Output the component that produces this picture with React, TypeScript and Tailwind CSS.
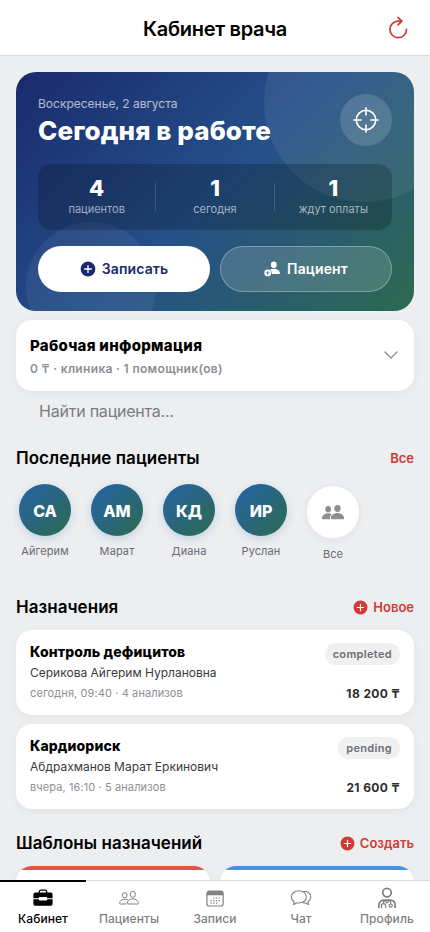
import React from 'react';

interface IconProps {
  className?: string;
}

interface Patient {
  initials: string;
  name: string;
}

interface Assignment {
  title: string;
  patient: string;
  meta: string;
  status: string;
  price: string;
}

const stats = [
  { value: '4', label: 'пациентов' },
  { value: '1', label: 'сегодня' },
  { value: '1', label: 'ждут оплаты' },
];

const patients: Patient[] = [
  { initials: 'СА', name: 'Айгерим' },
  { initials: 'АМ', name: 'Марат' },
  { initials: 'КД', name: 'Диана' },
  { initials: 'ИР', name: 'Руслан' },
];

const assignments: Assignment[] = [
  {
    title: 'Контроль дефицитов',
    patient: 'Серикова Айгерим Нурлановна',
    meta: 'сегодня, 09:40 · 4 анализов',
    status: 'completed',
    price: '18 200 ₸',
  },
  {
    title: 'Кардиориск',
    patient: 'Абдрахманов Марат Еркинович',
    meta: 'вчера, 16:10 · 5 анализов',
    status: 'pending',
    price: '21 600 ₸',
  },
];

const RefreshIcon: React.FC<IconProps> = ({ className }) => (
  <svg viewBox="0 0 24 24" fill="none" stroke="currentColor" strokeWidth="1.7" strokeLinecap="round" strokeLinejoin="round" className={className}>
    <path d="M20.5 13.4A8.3 8.3 0 1 1 12.2 5.1H15.6" />
    <path d="M12 1.4L15.8 5.1L12 8.9" />
  </svg>
);

const ScopeIcon: React.FC<IconProps> = ({ className }) => (
  <svg viewBox="0 0 26 26" fill="none" stroke="currentColor" strokeWidth="1.6" strokeLinecap="round" className={className}>
    <circle cx="13" cy="13" r="9.7" />
    <path d="M13 .9V8M13 18V25.1M.9 13H8M18 13H25.1" />
  </svg>
);

const PlusCircleIcon: React.FC<IconProps> = ({ className }) => (
  <svg viewBox="0 0 16 16" className={className}>
    <circle cx="8" cy="8" r="7.4" fill="currentColor" />
    <path d="M8 4.6V11.4M4.6 8H11.4" stroke="white" strokeWidth="1.3" strokeLinecap="round" />
  </svg>
);

const PersonAddIcon: React.FC<IconProps> = ({ className }) => (
  <svg viewBox="0 0 16 16" fill="currentColor" className={className}>
    <ellipse cx="9.8" cy="3.7" rx="2.9" ry="3.2" />
    <path d="M5.9 8.6C7 8 8.3 7.7 9.8 7.7C13.5 7.7 15.9 9.9 15.9 12.3C15.9 12.9 15.6 13.1 15 13.1H7.8C7.8 11.1 7.2 9.6 5.9 8.6Z" />
    <path fillRule="evenodd" d="M3.7 8.5A3.4 3.4 0 1 1 3.7 15.3A3.4 3.4 0 1 1 3.7 8.5ZM3.3 9.9V11.5H1.7V12.3H3.3V13.9H4.1V12.3H5.7V11.5H4.1V9.9Z" />
  </svg>
);

const ChevronDownIcon: React.FC<IconProps> = ({ className }) => (
  <svg viewBox="0 0 14 8" fill="none" stroke="currentColor" strokeWidth="1.4" strokeLinecap="round" strokeLinejoin="round" className={className}>
    <path d="M1 1L7 7L13 1" />
  </svg>
);

const PeopleFillIcon: React.FC<IconProps> = ({ className }) => (
  <svg viewBox="0 0 22 15" fill="currentColor" className={className}>
    <ellipse cx="6.2" cy="4.2" rx="2.9" ry="3.1" />
    <ellipse cx="15.5" cy="3.5" rx="3.2" ry="3.4" />
    <path d="M0 13.2C0 10.5 2.7 8.3 6.2 8.3C7.6 8.3 8.8 8.6 9.8 9.2C8.5 10.3 7.7 12 7.9 14.3H1C.3 14.3 0 13.9 0 13.2Z" />
    <path d="M8.9 13.2C8.9 10.4 11.7 8.1 15.5 8.1C19.2 8.1 22 10.4 22 13.2C22 13.9 21.6 14.3 20.9 14.3H10C9.3 14.3 8.9 13.9 8.9 13.2Z" />
  </svg>
);

const BriefcaseIcon: React.FC<IconProps> = ({ className }) => (
  <svg viewBox="0 0 20 18" className={className}>
    <path d="M6.3 4V2.8C6.3 1.8 6.9 1.2 7.9 1.2H12.1C13.1 1.2 13.7 1.8 13.7 2.8V4" fill="none" stroke="currentColor" strokeWidth="1.3" />
    <path d="M2.6 3.6H17.4C18.9 3.6 19.6 4.4 19.6 5.8V9.2H14.2V8.8C14.2 8.2 13.8 7.9 13.3 7.9H6.7C6.2 7.9 5.8 8.2 5.8 8.8V9.2H.4V5.8C.4 4.4 1.1 3.6 2.6 3.6Z" fill="currentColor" />
    <path d="M.4 10.3H5.8V10.5C5.8 11.1 6.2 11.4 6.7 11.4H13.3C13.8 11.4 14.2 11.1 14.2 10.5V10.3H19.6V14.4C19.6 15.9 18.8 16.7 17.3 16.7H2.7C1.2 16.7 .4 15.9 .4 14.4Z" fill="currentColor" />
  </svg>
);

const PeopleIcon: React.FC<IconProps> = ({ className }) => (
  <svg viewBox="0 0 20 16" fill="none" stroke="currentColor" strokeWidth="1" strokeLinejoin="round" className={className}>
    <ellipse cx="5.7" cy="5.2" rx="2.3" ry="2.6" />
    <ellipse cx="13.8" cy="4.3" rx="2.6" ry="3" />
    <path d="M8.9 9.9C8 9.4 6.9 9.2 5.7 9.2C2.7 9.2 .6 11.1 .6 13.2C.6 13.7 .8 14 1.4 14H7" />
    <path d="M13.8 8.8C16.9 8.8 19.4 10.9 19.4 13.2C19.4 13.7 19.1 14 18.6 14H9C8.5 14 8.2 13.7 8.2 13.2C8.2 10.9 10.7 8.8 13.8 8.8Z" />
  </svg>
);

const CalendarIcon: React.FC<IconProps> = ({ className }) => (
  <svg viewBox="0 0 18 17" className={className}>
    <rect x=".9" y="1.2" width="16.2" height="14.8" rx="2.3" fill="none" stroke="currentColor" strokeWidth="1.2" />
    <path d="M.9 3.8C.9 2.2 1.8 1.2 3.3 1.2H14.7C16.2 1.2 17.1 2.2 17.1 3.8V5.3H.9Z" fill="currentColor" />
    <path d="M7.3 8H8.5M10 8H11.2M12.7 8H13.9M4.4 10.6H5.6M7.3 10.6H8.5M10 10.6H11.2M12.7 10.6H13.9M4.4 13.2H5.6M7.3 13.2H8.5M10 13.2H11.2" stroke="currentColor" strokeWidth="1.2" />
  </svg>
);

const ChatIcon: React.FC<IconProps> = ({ className }) => (
  <svg viewBox="0 0 22 18" fill="none" stroke="currentColor" strokeWidth="1.1" strokeLinecap="round" strokeLinejoin="round" className={className}>
    <path d="M8.9 1.7C13 1.7 16.3 4.3 16.3 7.9C16.3 11.5 13 14 8.9 14C8.1 14 7.3 13.9 6.6 13.8C5.7 14.7 4.6 15.4 3.3 15.5C3.9 14.7 4.2 13.6 4.1 12.7C2.4 11.5 1.3 9.8 1.3 7.9C1.3 4.3 4.8 1.7 8.9 1.7Z" />
    <path d="M13.7 2.5C17.8 2 20.8 4.6 20.8 8C20.8 10 19.8 11.7 18.1 12.8C18 13.7 18.3 14.7 18.9 15.5C17.6 15.4 16.5 14.7 15.6 13.8C14.7 14 13.8 14 12.9 13.8" />
  </svg>
);

const DoctorIcon: React.FC<IconProps> = ({ className }) => (
  <svg viewBox="0 0 20 22" fill="none" stroke="currentColor" strokeWidth="1.7" className={className}>
    <circle cx="10" cy="5.6" r="4.3" />
    <path d="M1.9 21V18.6C1.9 15.4 3.8 13.2 6.8 13.2H13.2C16.2 13.2 18.1 15.4 18.1 18.6V21" />
    <path d="M6.6 13.5V16.5M4.5 21V18.8C4.5 17.4 5.3 16.7 6.6 16.7C7.900 16.7 8.700 17.4 8.700 18.8V21M13.6 13.500V17M7.5 13.500L10 16L12.500 13.500" strokeWidth="1.200" />
    <circle cx="13.7" cy="18.6" r="1.600" strokeWidth="1.200" />
  </svg>
);

const Header = () => (
  <header className="relative flex h-14 shrink-0 items-center justify-center border-b border-[#d9dbde] bg-white pb-px">
    <h1 className="mt-1 text-[20px] font-semibold leading-6 tracking-[-0.3px] text-black">Кабинет врача</h1>
    <button type="button" className="absolute right-5 top-4 text-[#d03a35]">
      <RefreshIcon className="size-6" />
    </button>
  </header>
);

const Hero = () => (
  <section className="relative h-[239px] overflow-hidden rounded-[20px] bg-[linear-gradient(135deg,#1a2a6c_0%,#25508a_50%,#2d6a4f_100%)] px-[22px] pt-[22px] text-white">
    <div className="absolute -right-[50px] -top-[70px] size-[200px] rounded-full bg-white/[0.07]" />
    <div className="absolute -bottom-[41px] left-[10px] size-[130px] rounded-full bg-white/[0.06]" />
    <div className="relative">
      <div className="flex items-start justify-between">
        <div>
          <p className="mt-px text-[12px] leading-[18px] text-white/65">Воскресенье, 2 августа</p>
          <h2 className="mt-[3px] text-[26px] font-extrabold leading-[30px] tracking-[0.1px]">Сегодня в работе</h2>
        </div>
        <div className="flex size-[52px] items-center justify-center rounded-full bg-white/15">
          <ScopeIcon className="size-[26px]" />
        </div>
      </div>
      <div className="mt-[18px] flex h-[66px] items-center rounded-[14px] bg-black/20">
        {stats.map((stat, index) => (
          <React.Fragment key={stat.label}>
            {index > 0 && <div className="h-7 w-px bg-white/15" />}
            <div className="flex-1 pb-px text-center">
              <p className="text-[22px] font-extrabold leading-6">{stat.value}</p>
              <p className="mt-px text-[11px] leading-4 text-white/60">{stat.label}</p>
            </div>
          </React.Fragment>
        ))}
      </div>
      <div className="mt-4 grid grid-cols-2 gap-2.5 text-[14px] font-semibold tracking-[0.15px]">
        <button type="button" className="flex h-[46px] items-center justify-center gap-1.5 rounded-full bg-white pb-px text-[#1a2a6c]">
          <PlusCircleIcon className="size-4" />
          Записать
        </button>
        <button type="button" className="flex h-[46px] items-center justify-center gap-[7px] rounded-full border-[1.5px] border-white/30 bg-white/15 pb-px">
          <PersonAddIcon className="size-4" />
          Пациент
        </button>
      </div>
    </div>
  </section>
);

const WorkInfo = () => (
  <section className="mt-[9px] flex h-[71px] items-center justify-between rounded-2xl bg-white px-3.5 shadow-[0_2px_8px_rgba(0,0,0,0.05)]">
    <div className="pt-[3px]">
      <h3 className="text-[15px] font-extrabold leading-5 tracking-[0.28px] text-black">Рабочая информация</h3>
      <p className="mt-1 text-[12px] font-semibold leading-[18px] tracking-[0.33px] text-[#8e8e93]">0 ₸ · клиника · 1 помощник(ов)</p>
    </div>
    <ChevronDownIcon className="mb-px mr-0.5 w-3.5 text-[#8e8e93]" />
  </section>
);

interface SectionTitleProps {
  title: string;
  action: string;
  icon?: boolean;
}

const SectionTitle: React.FC<SectionTitleProps> = ({ title, action, icon }) => (
  <div className="flex h-6 items-center justify-between pt-0.5">
    <h3 className="text-[17px] font-semibold tracking-[0.04px] text-black">{title}</h3>
    <button type="button" className="flex items-center gap-[5px] text-[13px] font-semibold text-[#d03a35]">
      {icon && <PlusCircleIcon className="-mt-0.5 size-[15px]" />}
      {action}
    </button>
  </div>
);

const RecentPatients = () => (
  <div className="mt-[14px] flex h-[97px] items-start gap-3.5">
    {patients.map((patient) => (
      <div key={patient.name} className="flex w-[58px] flex-col items-center">
        <div className="flex size-[52px] items-center justify-center rounded-full bg-[linear-gradient(135deg,#2563a8,#2d6a4f)] pt-px text-[16px] font-extrabold text-white shadow-[0_3px_8px_rgba(37,99,168,0.2)]">
          {patient.initials}
        </div>
        <span className="mt-[7px] text-[11px] leading-4 tracking-[0.1px] text-[#6b6b70]">{patient.name}</span>
      </div>
    ))}
    <div className="flex w-[58px] flex-col items-center">
      <div className="flex size-14 items-center justify-center rounded-full border-2 border-[#e8e9ec] bg-white text-[#8e8e8e] shadow-[0_2px_6px_rgba(0,0,0,0.04)]">
        <PeopleFillIcon className="w-[22px]" />
      </div>
      <span className="mt-1.5 text-[11px] leading-4 tracking-[0.1px] text-[#6b6b70]">Все</span>
    </div>
  </div>
);

const AssignmentCard: React.FC<{ item: Assignment }> = ({ item }) => (
  <article className="flex h-[85px] justify-between rounded-2xl bg-white px-3.5 pb-3 pt-[13px] shadow-[0_2px_8px_rgba(0,0,0,0.05)]">
    <div>
      <h4 className="text-[14px] font-extrabold leading-[18px] tracking-[0.12px] text-black">{item.title}</h4>
      <p className="mt-[3px] text-[12px] leading-[18px] text-[#3a3a3c]">{item.patient}</p>
      <p className="mt-[3px] text-[11px] leading-4 tracking-[0.1px] text-[#8e8e93]">{item.meta}</p>
    </div>
    <div className="flex flex-col items-end justify-between">
      <span className="rounded-full bg-[#f0f0f0] px-2 text-[11px] font-semibold leading-[22px] tracking-[0.33px] text-[#6e6e73]">{item.status}</span>
      <span className="text-[12px] font-bold leading-[18px] tracking-[0.4px] text-[#2c2c2e]">{item.price}</span>
    </div>
  </article>
);

const tabs = [
  { label: 'Кабинет', icon: <BriefcaseIcon className="w-5" />, active: true },
  { label: 'Пациенты', icon: <PeopleIcon className="w-5" /> },
  { label: 'Записи', icon: <CalendarIcon className="w-[18px]" /> },
  { label: 'Чат', icon: <ChatIcon className="w-[22px]" /> },
  { label: 'Профиль', icon: <DoctorIcon className="w-5" /> },
];

const TabBar = () => (
  <nav className="flex h-[52px] shrink-0 border-t border-[#d9dbde] bg-white">
    {tabs.map((tab) => (
      <button
        key={tab.label}
        type="button"
        className={
          tab.active
            ? '-mt-px flex flex-1 flex-col items-center border-t-2 border-black pt-[5px] text-black'
            : 'flex flex-1 flex-col items-center pt-1.5 text-[#808080]'
        }
      >
        <span className="flex h-[22px] items-center">{tab.icon}</span>
        <span className="mt-px text-[12px] font-medium leading-[18px] tracking-[0.06px]">{tab.label}</span>
      </button>
    ))}
  </nav>
);

export default function App() {
  return (
    <div className="flex h-[932px] w-[430px] flex-col overflow-hidden bg-[#eceef0] font-['Inter',sans-serif]">
      <Header />
      <main className="min-h-0 flex-1 overflow-hidden px-4 pt-4">
        <Hero />
        <WorkInfo />
        <input
          type="text"
          placeholder="Найти пациента..."
          className="block h-[42px] w-full bg-transparent px-[23px] pb-0.5 text-[16px] tracking-[-0.22px] text-black outline-none placeholder:text-[#7c7c7f]"
        />
        <div className="mt-[13px]">
          <SectionTitle title="Последние пациенты" action="Все" />
          <RecentPatients />
        </div>
        <div className="mt-[14px]">
          <SectionTitle title="Назначения" action="Новое" icon />
          <div className="mt-[10.5px] flex flex-col gap-[9px]">
            {assignments.map((item) => (
              <AssignmentCard key={item.title} item={item} />
            ))}
          </div>
        </div>
        <div className="mt-[22.5px]">
          <SectionTitle title="Шаблоны назначений" action="Создать" icon />
          <div className="mt-[11px] flex gap-2.5">
            <div className="h-24 flex-1 overflow-hidden rounded-2xl bg-white shadow-[0_2px_8px_rgba(0,0,0,0.05)]">
              <div className="h-1 bg-[#e05545]" />
            </div>
            <div className="h-24 flex-1 overflow-hidden rounded-2xl bg-white shadow-[0_2px_8px_rgba(0,0,0,0.05)]">
              <div className="h-1 bg-[#4a90e2]" />
            </div>
          </div>
        </div>
      </main>
      <TabBar />
    </div>
  );
}
